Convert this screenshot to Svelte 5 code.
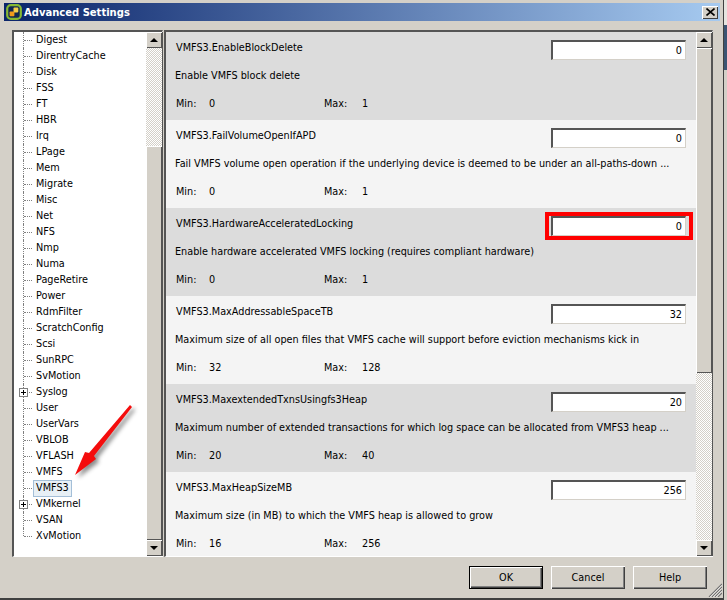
<script>
  const tree = ['Digest','DirentryCache','Disk','FSS','FT','HBR','Irq','LPage','Mem','Migrate','Misc','Net','NFS','Nmp','Numa','PageRetire','Power','RdmFilter','ScratchConfig','Scsi','SunRPC','SvMotion','Syslog','User','UserVars','VBLOB','VFLASH','VMFS','VMFS3','VMkernel','VSAN','XvMotion'];
  const expandable = ['Syslog','VMkernel'];
  const rows = [
    { name:'VMFS3.EnableBlockDelete', value:'0', desc:'Enable VMFS block delete', min:'0', max:'1' },
    { name:'VMFS3.FailVolumeOpenIfAPD', value:'0', desc:'Fail VMFS volume open operation if the underlying device is deemed to be under an all-paths-down ...', min:'0', max:'1' },
    { name:'VMFS3.HardwareAcceleratedLocking', value:'0', desc:'Enable hardware accelerated VMFS locking (requires compliant hardware)', min:'0', max:'1', mark:true },
    { name:'VMFS3.MaxAddressableSpaceTB', value:'32', desc:'Maximum size of all open files that VMFS cache will support before eviction mechanisms kick in', min:'32', max:'128' },
    { name:'VMFS3.MaxextendedTxnsUsingfs3Heap', value:'20', desc:'Maximum number of extended transactions for which log space can be allocated from VMFS3 heap ...', min:'20', max:'40' },
    { name:'VMFS3.MaxHeapSizeMB', value:'256', desc:'Maximum size (in MB) to which the VMFS heap is allowed to grow', min:'16', max:'256' }
  ];
</script>

<div class="screen">
  <div class="window">
    <div class="titlebar">
      <svg class="logo" viewBox="0 0 16 16" width="16" height="16" aria-hidden="true">
        <rect x="1.2" y="1.2" width="13.6" height="13.6" rx="3.6" fill="#12284f" stroke="#86b832" stroke-width="2.2"/>
        <rect x="7.5" y="3.6" width="4.8" height="4.8" rx="0.8" fill="#f6cf4a"/>
        <rect x="3.6" y="7.5" width="4.8" height="4.8" rx="0.8" fill="#f09a1a"/>
      </svg>
      <span class="title">Advanced Settings</span>
      <div class="close">
        <svg viewBox="0 0 9 8" width="9" height="8" aria-hidden="true"><path d="M0.5 0.5L8.5 7.5M8.5 0.5L0.5 7.5" stroke="#000" stroke-width="1.6"/></svg>
      </div>
    </div>

    <div class="main">
      <div class="panel treepanel">
        <ul class="tree">
          {#each tree as item, i}
            <li class="node" class:last={i === tree.length - 1}>
              {#if expandable.includes(item)}<span class="plus"></span>{/if}
              <span class="label" class:selected={item === 'VMFS3'}>{item}</span>
            </li>
          {/each}
        </ul>
        <div class="scrollbar">
          <div class="sbtn"><span class="up"></span></div>
          <div class="track treetrack"></div>
          <div class="thumb treethumb"></div>
          <div class="sbtn"><span class="down"></span></div>
        </div>
      </div>

      <div class="panel contentpanel">
        <div class="rows">
          {#each rows as r, i}
            <div class="row" class:alt={i % 2 === 1}>
              <div class="top">
                <span class="name">{r.name}</span>
                <div class="field">
                  {r.value}
                  {#if r.mark}<span class="mark"></span>{/if}
                </div>
              </div>
              <div class="desc">{r.desc}</div>
              <div class="range">
                <span class="lab">Min:</span><span class="minv">{r.min}</span>
                <span class="labmax">Max:</span><span>{r.max}</span>
              </div>
            </div>
          {/each}
        </div>
        <div class="scrollbar">
          <div class="sbtn"><span class="up"></span></div>
          <div class="thumb contentthumb"></div>
          <div class="track contenttrack"></div>
          <div class="sbtn"><span class="down"></span></div>
        </div>
      </div>
    </div>

    <div class="footer">
      <button class="btn default">OK</button>
      <button class="btn">Cancel</button>
      <button class="btn">Help</button>
    </div>

    <svg class="grip" viewBox="0 0 14 14" width="14" height="14" aria-hidden="true">
      <path d="M14 1L1 14M14 4L4 14M14 7L7 14M14 10L10 14" stroke="#707070" stroke-width="1.1"/>
      <path d="M14 2.2L2.2 14M14 5.2L5.2 14M14 8.2L8.2 14" stroke="#fff" stroke-width="0.7"/>
    </svg>

    <svg class="arrow" viewBox="0 0 70 80" width="70" height="80" aria-hidden="true">
      <polygon points="65,2 67,4 29,53 31,56 10,72 20,49 24,50" fill="#f40d0d"/>
    </svg>
  </div>

  <div class="backdrop">
    <div class="bd-a"></div>
    <div class="bd-b"></div>
    <div class="bd-c"></div>
  </div>
</div>

<style>
  :global(body) {
    margin: 0;
    background: #d4d0c8;
    font-family: "DejaVu Sans", sans-serif;
    font-size: 9.7px;
    color: #000;
  }
  .screen {
    display: flex;
    width: 727px;
    height: 600px;
    overflow: hidden;
  }
  .window {
    position: relative;
    box-sizing: border-box;
    width: 724px;
    height: 600px;
    flex: none;
    background: #d4d0c8;
    border-right: 1px solid #404040;
    border-bottom: 2px solid #404040;
    padding: 3px 3px 0 4px;
  }
  .backdrop {
    flex: 1;
    display: flex;
    flex-direction: column;
    background: #d4d0c8;
  }
  .bd-a { height: 25px; background: #e6e4df; }
  .bd-b { height: 45px; background: #3b5573; }
  .bd-c { flex: 1; background: #d4d0c8; }

  .titlebar {
    height: 18px;
    display: flex;
    align-items: center;
    padding: 0 2px;
    background: linear-gradient(90deg, #0a246a 0%, #a6caf0 100%);
    color: #fff;
  }
  .logo { flex: none; }
  .title {
    margin-left: 2px;
    font-weight: 700;
    font-size: 10px;
    letter-spacing: 0;
  }
  .close {
    margin-left: auto;
    width: 16px;
    height: 13px;
    display: flex;
    align-items: center;
    justify-content: center;
    background: #d4d0c8;
    box-shadow: inset 1px 1px 0 #fff, inset -1px -1px 0 #404040;
  }

  .main {
    display: flex;
    gap: 1px;
    margin-top: 9px;
    padding-left: 8px;
    height: 527px;
  }
  .panel {
    box-sizing: border-box;
    display: flex;
    height: 527px;
    border-top: 2px solid #555;
    border-left: 2px solid #555;
    border-right: 1px solid #fff;
    border-bottom: 1px solid #fff;
  }
  .treepanel { width: 151px; }
  .contentpanel { width: 549px; }

  .tree {
    list-style: none;
    margin: 0;
    padding: 0;
    width: 132px;
    background: #fff;
    flex: none;
    overflow: hidden;
  }
  .node {
    position: relative;
    height: 16px;
    box-sizing: border-box;
    padding-left: 19px;
    display: flex;
    align-items: center;
  }
  .node::before {
    content: "";
    position: absolute;
    left: 9px;
    top: 0;
    bottom: 0;
    border-left: 1px dotted #808080;
  }
  .node.last::before { bottom: 8px; }
  .node::after {
    content: "";
    position: absolute;
    left: 10px;
    width: 8px;
    top: 8px;
    border-top: 1px dotted #808080;
  }
  .plus {
    position: absolute;
    left: 5px;
    top: 4px;
    z-index: 1;
    box-sizing: border-box;
    width: 9px;
    height: 9px;
    border: 1px solid #808080;
    background:
      linear-gradient(#000, #000) center / 5px 1px no-repeat,
      linear-gradient(#000, #000) center / 1px 5px no-repeat,
      #fff;
  }
  .label {
    box-sizing: border-box;
    height: 16px;
    line-height: 14px;
    padding: 0 2px;
    border: 1px solid transparent;
    white-space: nowrap;
  }
  .label.selected {
    height: 17px;
    background: #e8f0f6;
    border-color: #a4bfd8;
  }

  .scrollbar {
    flex: none;
    width: 16px;
    display: flex;
    flex-direction: column;
    border-right: 1px solid #555;
    box-sizing: content-box;
  }
  .sbtn {
    box-sizing: border-box;
    flex: none;
    height: 16px;
    display: flex;
    align-items: center;
    justify-content: center;
    background: #d4d0c8;
    box-shadow: inset 1px 1px 0 #fff, inset -1px -1px 0 #555;
  }
  .up, .down {
    width: 0;
    height: 0;
    border-left: 4px solid transparent;
    border-right: 4px solid transparent;
  }
  .up { border-bottom: 4px solid #000; }
  .down { border-top: 4px solid #000; }
  .track {
    background: repeating-conic-gradient(#d4d0c8 0 25%, #fff 0 50%) 0 0 / 2px 2px;
  }
  .thumb {
    background: #d4d0c8;
    box-shadow: inset 1px 1px 0 #fff, inset -1px -1px 0 #555;
  }
  .treetrack { height: 98px; }
  .treethumb { flex: 1; }
  .contentthumb { height: 325px; }
  .contenttrack { flex: 1; }

  .rows {
    width: 530px;
    flex: none;
    overflow: hidden;
    background: #f4f4f4;
  }
  .row {
    box-sizing: border-box;
    height: 88px;
    padding: 8px 10px 0;
    background: #dcdcdc;
    white-space: nowrap;
  }
  .row.alt { background: #f4f4f4; }
  .top {
    display: flex;
    justify-content: space-between;
    align-items: flex-start;
    height: 20px;
    line-height: 14px;
  }
  .name { margin-top: 1px; }
  .field {
    position: relative;
    box-sizing: border-box;
    width: 135px;
    height: 20px;
    line-height: 16px;
    text-align: right;
    padding: 1px 3px 0 0;
    background: #fff;
    border-top: 2px solid #555;
    border-left: 2px solid #555;
    border-right: 1px solid #d4d0c8;
    border-bottom: 1px solid #d4d0c8;
  }
  .mark {
    position: absolute;
    top: -6px;
    bottom: -5px;
    left: -8px;
    right: -8px;
    border: 4px solid #f00;
    pointer-events: none;
  }
  .desc {
    margin-top: 9px;
    margin-left: -1px;
    line-height: 14px;
  }
  .range {
    display: flex;
    margin-top: 14px;
    line-height: 14px;
  }
  .lab { width: 33px; }
  .minv { width: 115px; }
  .labmax { width: 38px; }

  .footer {
    display: flex;
    justify-content: flex-end;
    gap: 8px;
    margin-top: 9px;
    padding-right: 13px;
  }
  .btn {
    box-sizing: border-box;
    width: 74px;
    height: 23px;
    padding: 0;
    border: none;
    font: inherit;
    color: #000;
    background: #d4d0c8;
    box-shadow: inset 1px 1px 0 #fff, inset -1px -1px 0 #404040, inset -2px -2px 0 #808080;
  }
  .btn.default { border: 1px solid #000; }
  .grip {
    position: absolute;
    right: 1px;
    bottom: 1px;
  }
  .arrow {
    position: absolute;
    left: 65px;
    top: 403px;
    overflow: visible;
    filter: drop-shadow(3px 3px 2px rgba(0,0,0,0.45));
  }
</style>
